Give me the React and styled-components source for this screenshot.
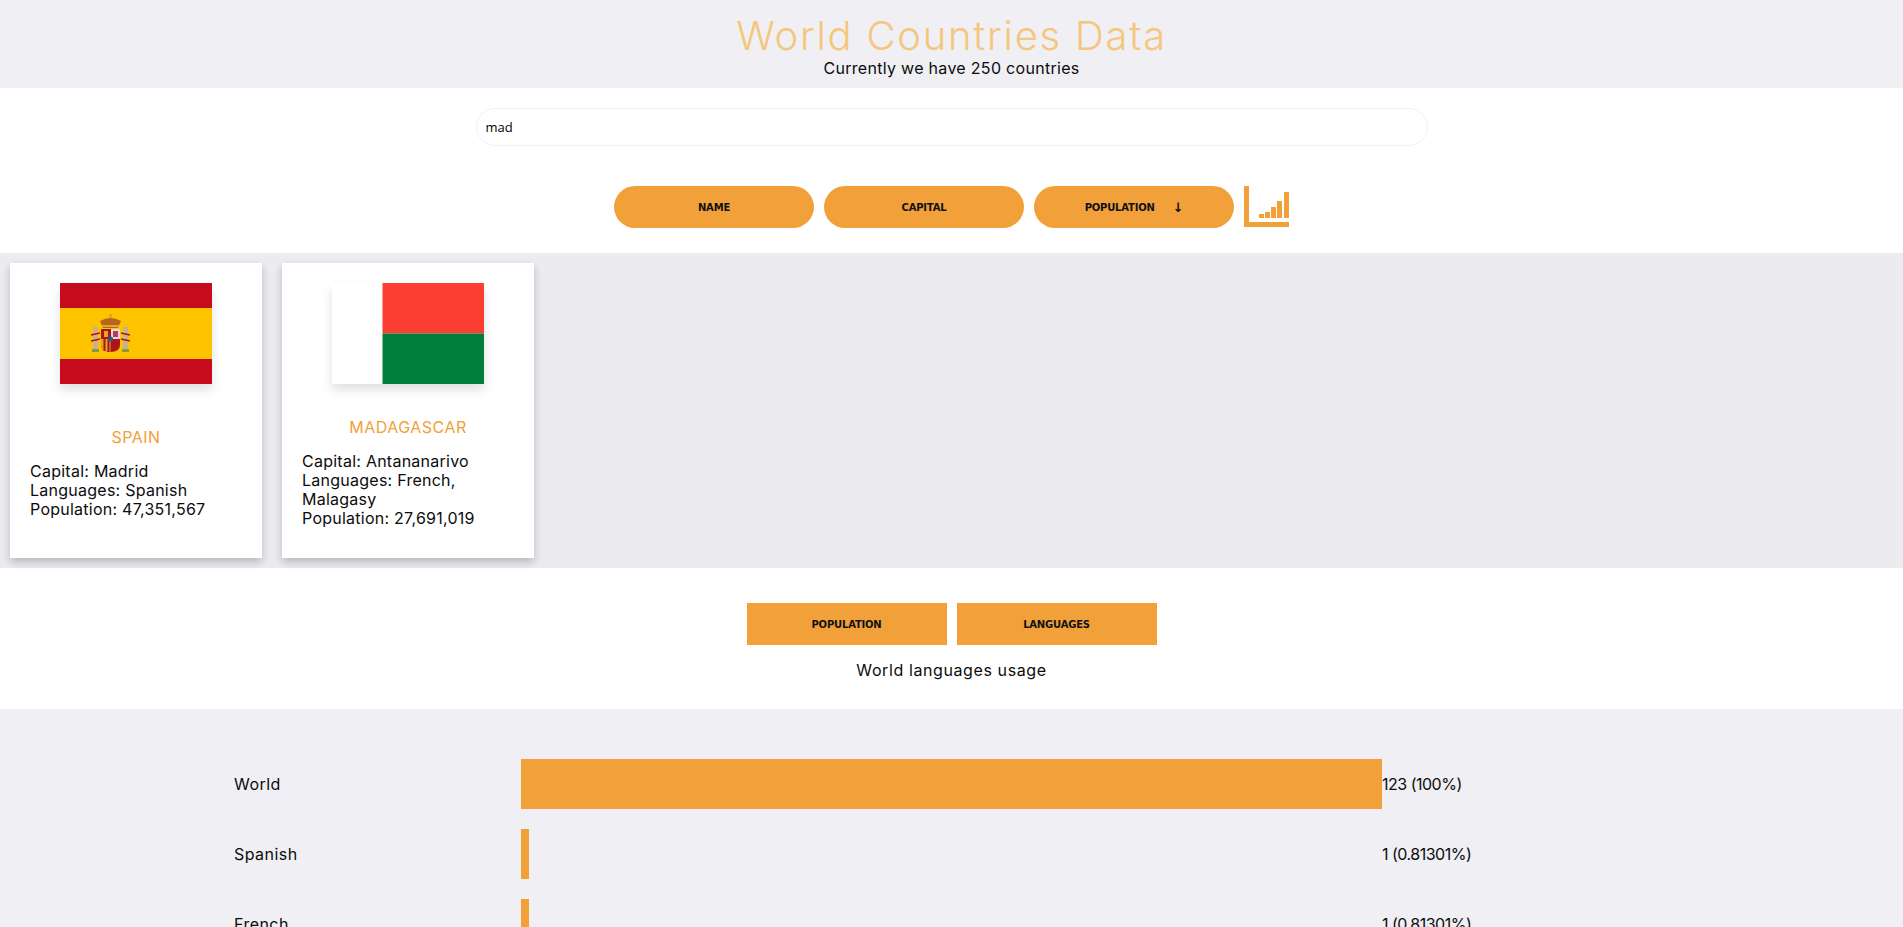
import React from 'react';
import styled, { createGlobalStyle } from 'styled-components';

const orange = '#f1a03a';

const GlobalStyle = createGlobalStyle`
    html, body {
        margin: 0;
        padding: 0;
        background: #fff;
        color: #0c0c0c;
        font-family: Inter, "Liberation Sans", sans-serif;
        font-size: 16px;
    }
    * {
        box-sizing: border-box;
    }
`;

const Header = styled.header`
    height: 88px;
    background: #efeff4;
    text-align: center;
    padding-top: 13px;
`;
const Title = styled.h1`
    margin: 0;
    font-size: 40px;
    line-height: 45px;
    font-weight: 300;
    letter-spacing: 1.75px;
    color: #f5c67c;
`;
const Subtitle = styled.p`
    margin: 0;
    line-height: 20px;
    letter-spacing: .3px;
`;

const Controls = styled.section`
    display: flex;
    flex-direction: column;
    align-items: center;
    height: 165px;
    padding-top: 20px;
`;
const SearchInput = styled.input`
    width: 952px;
    height: 38px;
    padding: 0 9px;
    border: 1px solid #f1f1f1;
    border-radius: 20px;
    outline: none;
    background: #fff;
    color: #000;
    font-family: "Open Sans", sans-serif;
    font-size: 13px;
`;
const SortRow = styled.div`
    display: flex;
    gap: 10px;
    margin-top: 40px;
`;
const Button = styled.button`
    display: flex;
    align-items: center;
    justify-content: center;
    width: 200px;
    height: 42px;
    padding: 1px 0 0;
    border: none;
    border-radius: ${ ({ $pill }) => ($pill ? '21px' : '0') };
    background: ${ orange };
    color: #111;
    font-family: "DejaVu Sans", sans-serif;
    font-size: 10px;
    font-weight: 700;
    letter-spacing: -.2px;
`;
const Arrow = styled.span`
    margin-left: 18px;
    font-size: 13px;
    line-height: 1;
`;

const Countries = styled.section`
    display: flex;
    gap: 20px;
    height: 315px;
    padding: 10px;
    background: #ebebf0;
`;
const Card = styled.article`
    display: flex;
    flex-direction: column;
    align-items: center;
    width: 252px;
    padding: 20px;
    background: #fff;
    box-shadow: 0 4px 8px rgba(0, 0, 0, .22);
`;
const Flag = styled.svg`
    display: block;
    flex: none;
    width: 152px;
    height: 101px;
    box-shadow: 0 6px 10px rgba(0, 0, 0, .12);
`;
const CardBody = styled.div`
    display: flex;
    flex: 1;
    flex-direction: column;
    justify-content: center;
    align-self: stretch;
    margin-top: 24px;
`;
const CountryName = styled.h3`
    margin: 0 0 15px;
    font-size: 16px;
    line-height: 19px;
    font-weight: 400;
    text-align: center;
    letter-spacing: .5px;
    color: ${ orange };
`;
const CountryInfo = styled.p`
    margin: 0;
    line-height: 19px;
    letter-spacing: .25px;
`;

const Tabs = styled.section`
    display: flex;
    flex-direction: column;
    align-items: center;
    height: 141px;
    padding-top: 35px;
`;
const TabRow = styled.div`
    display: flex;
    gap: 10px;
`;
const TabCaption = styled.p`
    margin: 15px 0 0;
    line-height: 20px;
    letter-spacing: .6px;
`;

const Chart = styled.section`
    display: flex;
    flex-direction: column;
    gap: 20px;
    padding: 50px 0 50px 234px;
    background: #efeff4;
`;
const ChartRow = styled.div`
    display: grid;
    grid-template-columns: 287px 861px 1fr;
    align-items: center;
    height: 50px;
`;
const ChartLabel = styled.span`
    letter-spacing: .45px;
`;
const ChartValue = styled.span`
    letter-spacing: -.5px;
`;
const Bar = styled.div`
    height: 50px;
    background: ${ orange };
`;

const SpainFlag = () => (
    <Flag viewBox="0 0 152 101">
        <rect width="152" height="101" fill="#c60b1e" />
        <rect y="25" width="152" height="51" fill="#ffc400" />
        <rect x="33" y="44" width="5" height="22" fill="#c8b18b" />
        <rect x="63" y="44" width="5" height="22" fill="#c8b18b" />
        <rect x="32" y="66" width="7" height="3" fill="#8a9a3a" />
        <rect x="62" y="66" width="7" height="3" fill="#8a9a3a" />
        <path d="M31 52 L40 50 M31 58 L40 56 M61 50 L70 52 M61 56 L70 58" stroke="#ad1519" strokeWidth="1.6" fill="none" />
        <path d="M43 45 L40 38 Q45 35 50.5 35 Q56 35 61 38 L58 45 Z" fill="#b8641c" />
        <rect x="49.5" y="31" width="2" height="4" fill="#c8a02c" />
        <rect x="42" y="42" width="17" height="2" fill="#d9a92c" />
        <path d="M41 46 H60 V62 Q60 69 50.5 69 Q41 69 41 62 Z" fill="#ad1519" />
        <rect x="51" y="46" width="9" height="10" fill="#ead9dc" />
        <rect x="53" y="48" width="5" height="6" fill="#b0415a" />
        <rect x="44" y="48" width="4" height="6" fill="#d9a92c" />
        <path d="M41 56 H50.5 V69 Q41 69 41 62 Z" fill="#e0a52a" />
        <rect x="43.5" y="56" width="2" height="12" fill="#ad1519" />
        <rect x="47.5" y="56" width="2" height="13" fill="#ad1519" />
        <circle cx="50.5" cy="56" r="2.6" fill="#2b5a8a" />
    </Flag>
);

const MadagascarFlag = () => (
    <Flag viewBox="0 0 152 101">
        <rect width="152" height="101" fill="#fff" />
        <rect x="50.5" width="101.5" height="50.5" fill="#fc3d32" />
        <rect x="50.5" y="50.5" width="101.5" height="50.5" fill="#007e3a" />
    </Flag>
);

const StatsIcon = () => (
    <svg width="45" height="41" viewBox="0 0 45 41" fill={ orange }>
        <rect width="5" height="41" />
        <rect y="36" width="45" height="5" />
        <rect x="15" y="28" width="5" height="4" />
        <rect x="21" y="26" width="5" height="6" />
        <rect x="27" y="21" width="5" height="11" />
        <rect x="33" y="15" width="5" height="17" />
        <rect x="40" y="6" width="5" height="26" />
    </svg>
);

const countries = [
    { name: 'SPAIN', flag: <SpainFlag />, capital: 'Madrid', languages: 'Spanish', population: '47,351,567' },
    { name: 'MADAGASCAR', flag: <MadagascarFlag />, capital: 'Antananarivo', languages: 'French, Malagasy', population: '27,691,019' },
];

const languages = [
    { name: 'World', value: '123 (100%)', width: 861 },
    { name: 'Spanish', value: '1 (0.81301%)', width: 8 },
    { name: 'French', value: '1 (0.81301%)', width: 8 },
    { name: 'Malagasy', value: '1 (0.81301%)', width: 8 },
];

const App = () => (
    <>
        <GlobalStyle />
        <Header>
            <Title>World Countries Data</Title>
            <Subtitle>Currently we have 250 countries</Subtitle>
        </Header>
        <Controls>
            <SearchInput defaultValue="mad" />
            <SortRow>
                <Button $pill>NAME</Button>
                <Button $pill>CAPITAL</Button>
                <Button $pill>POPULATION<Arrow>↓</Arrow></Button>
                <StatsIcon />
            </SortRow>
        </Controls>
        <Countries>
            { countries.map((country) => (
                <Card key={ country.name }>
                    { country.flag }
                    <CardBody>
                        <CountryName>{ country.name }</CountryName>
                        <CountryInfo>
                            Capital: { country.capital }<br />
                            Languages: { country.languages }<br />
                            Population: { country.population }
                        </CountryInfo>
                    </CardBody>
                </Card>
            )) }
        </Countries>
        <Tabs>
            <TabRow>
                <Button>POPULATION</Button>
                <Button>LANGUAGES</Button>
            </TabRow>
            <TabCaption>World languages usage</TabCaption>
        </Tabs>
        <Chart>
            { languages.map((language) => (
                <ChartRow key={ language.name }>
                    <ChartLabel>{ language.name }</ChartLabel>
                    <Bar style={ { width: language.width } } />
                    <ChartValue>{ language.value }</ChartValue>
                </ChartRow>
            )) }
        </Chart>
    </>
);

export default App;
